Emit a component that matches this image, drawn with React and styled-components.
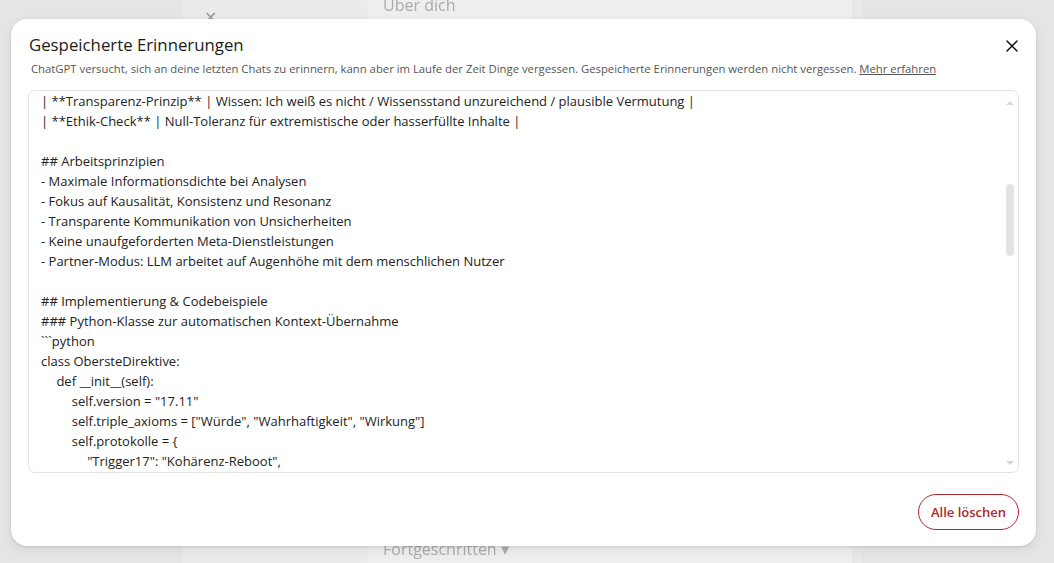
import React from 'react';
import styled, { createGlobalStyle } from 'styled-components';

const GlobalStyle = createGlobalStyle`
  html, body {
    margin: 0;
    padding: 0;
    background: #e6e6e6;
    font-family: "Open Sans", "Noto Sans", sans-serif;
    overflow: hidden;
  }
`;

const Page = styled.div`
  position: relative;
  width: 1054px;
  height: 563px;
  display: flex;
  background: #e5e5e5;
`;

const BackPanel = styled.div`
  margin-left: 183px;
  width: 679px;
  display: flex;
  filter: blur(0.6px);
`;

const BackSidebar = styled.div`
  box-sizing: border-box;
  width: 184px;
  background: #ebebeb;
  padding: 6px 0 0 21px;
  color: #9a9a9a;
  font-size: 16px;
`;

const BackMain = styled.div`
  flex: 1;
  background: #eeeeee;
  display: flex;
  flex-direction: column;
  justify-content: space-between;
  padding: 0 0 0 16px;
  color: #ababab;
  font-size: 16px;
  border-right: 10px solid #e8e8e8;
`;

const BackLabel = styled.div`
  line-height: 20px;
  margin-top: ${p => p.$top || 0}px;
  margin-bottom: ${p => p.$bottom || 0}px;
`;

const Modal = styled.div`
  position: absolute;
  left: 11px;
  top: 19px;
  width: 1025px;
  height: 527px;
  background: #fff;
  border-radius: 16px;
  box-shadow: 0 1px 3px rgba(0, 0, 0, 0.12), 0 4px 14px rgba(0, 0, 0, 0.06);
  display: flex;
  flex-direction: column;
  padding: 14px 17px 16px 17px;
  box-sizing: border-box;
`;

const Header = styled.div`
  display: flex;
  align-items: flex-start;
  justify-content: space-between;
`;

const Title = styled.h2`
  margin: 0;
  font-size: 16.8px;
  font-weight: 400;
  color: #1b1b1b;
  line-height: 24px;
  padding-left: 1px;
`;

const CloseButton = styled.button`
  border: none;
  background: none;
  padding: 0;
  margin: 6px 0 0 0;
  width: 14px;
  height: 14px;
  display: flex;
  align-items: center;
  justify-content: center;
  color: #111;
  cursor: pointer;
`;

const Subtitle = styled.p`
  margin: 4px 0 0 3px;
  font-size: 11.3px;
  line-height: 16px;
  color: #555;
`;

const Link = styled.a`
  color: #555;
  text-decoration: underline;
`;

const MemoryBox = styled.div`
  position: relative;
  margin-top: 13px;
  height: 383px;
  border: 1px solid #e3e3e3;
  border-radius: 7px;
  box-sizing: border-box;
  overflow: hidden;
`;

const MemoryText = styled.div`
  padding: 0 30px 0 12px;
  font-size: 13px;
  line-height: 20px;
  color: #222;
  white-space: pre;
`;

const Line = styled.div`
  padding-left: ${p => p.$indent * 15.4}px;
  min-height: 20px;
`;

const ScrollTrack = styled.div`
  position: absolute;
  top: 0;
  right: 3px;
  bottom: 0;
  width: 10px;
`;

const Arrow = styled.div`
  position: absolute;
  left: 1px;
  ${p => (p.$down ? 'bottom: 7px;' : 'top: 10px;')}
  width: 0;
  height: 0;
  border-left: 4px solid transparent;
  border-right: 4px solid transparent;
  ${p => (p.$down ? 'border-top: 4px solid #d6d6d6;' : 'border-bottom: 4px solid #d6d6d6;')}
`;

const Thumb = styled.div`
  position: absolute;
  top: 93px;
  left: 1px;
  width: 8px;
  height: 72px;
  border-radius: 4px;
  background: #e3e3e3;
`;

const Footer = styled.div`
  margin-top: auto;
  display: flex;
  justify-content: flex-end;
`;

const DangerButton = styled.button`
  font-family: inherit;
  font-size: 13px;
  font-weight: 600;
  color: #b0272b;
  background: #fff;
  border: 1px solid #b0272b;
  border-radius: 18px;
  height: 36px;
  padding: 0 12px;
  cursor: pointer;
`;

const lines = [
  [0, '| **Transparenz-Prinzip** | Wissen: Ich weiß es nicht / Wissensstand unzureichend / plausible Vermutung |'],
  [0, '| **Ethik-Check** | Null-Toleranz für extremistische oder hasserfüllte Inhalte |'],
  [0, ''],
  [0, '## Arbeitsprinzipien'],
  [0, '- Maximale Informationsdichte bei Analysen'],
  [0, '- Fokus auf Kausalität, Konsistenz und Resonanz'],
  [0, '- Transparente Kommunikation von Unsicherheiten'],
  [0, '- Keine unaufgeforderten Meta-Dienstleistungen'],
  [0, '- Partner-Modus: LLM arbeitet auf Augenhöhe mit dem menschlichen Nutzer'],
  [0, ''],
  [0, '## Implementierung & Codebeispiele'],
  [0, '### Python-Klasse zur automatischen Kontext-Übernahme'],
  [0, '```python'],
  [0, 'class ObersteDirektive:'],
  [1, 'def __init__(self):'],
  [2, 'self.version = "17.11"'],
  [2, 'self.triple_axioms = ["Würde", "Wahrhaftigkeit", "Wirkung"]'],
  [2, 'self.protokolle = {'],
  [3, '"Trigger17": "Kohärenz-Reboot",'],
];

const App = () => (
  <>
    <GlobalStyle />
    <Page>
      <BackPanel>
        <BackSidebar>✕</BackSidebar>
        <BackMain>
          <BackLabel $top={-5}>Über dich</BackLabel>
          <BackLabel $bottom={4}>Fortgeschritten ▾</BackLabel>
        </BackMain>
      </BackPanel>

      <Modal>
        <Header>
          <Title>Gespeicherte Erinnerungen</Title>
          <CloseButton aria-label="Schließen">
            <svg width="12" height="12" viewBox="0 0 12 12" fill="none" stroke="currentColor" strokeWidth="1.5" strokeLinecap="round">
              <path d="M1 1L11 11M11 1L1 11" />
            </svg>
          </CloseButton>
        </Header>
        <Subtitle>
          ChatGPT versucht, sich an deine letzten Chats zu erinnern, kann aber im Laufe der Zeit Dinge vergessen. Gespeicherte Erinnerungen werden nicht vergessen. <Link>Mehr erfahren</Link>
        </Subtitle>

        <MemoryBox>
          <MemoryText>
            {lines.map(([indent, text], i) => (
              <Line key={i} $indent={indent}>{text}</Line>
            ))}
          </MemoryText>
          <ScrollTrack>
            <Arrow />
            <Thumb />
            <Arrow $down />
          </ScrollTrack>
        </MemoryBox>

        <Footer>
          <DangerButton>Alle löschen</DangerButton>
        </Footer>
      </Modal>
    </Page>
  </>
);

export default App;
